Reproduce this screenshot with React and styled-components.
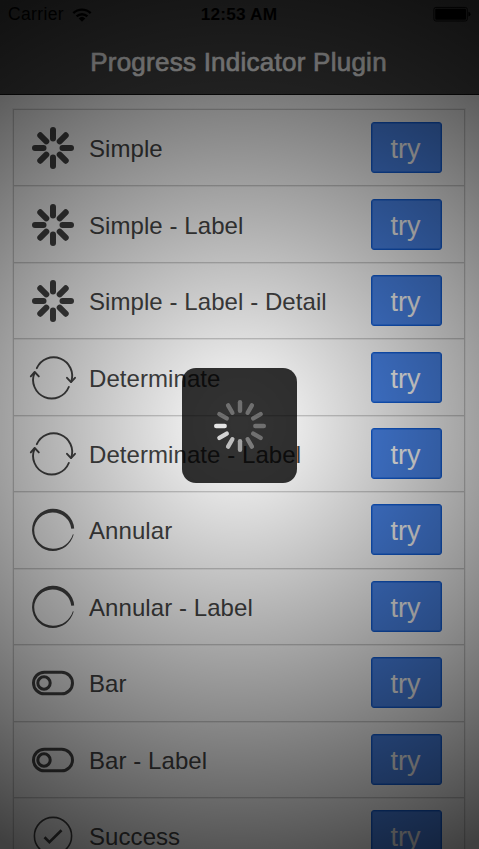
import React from "react";
import styled, { createGlobalStyle } from "styled-components";

const GlobalStyle = createGlobalStyle`
  * { box-sizing: border-box; }
  html, body { margin: 0; padding: 0; height: 100%; overflow: hidden; }
  body { font-family: "Liberation Sans", Arial, sans-serif; }
`;

const Screen = styled.main`
  position: relative;
  width: 479px;
  height: 849px;
  overflow: hidden;
  background: #fff;
`;

const Header = styled.header`
  height: 95px;
  background: #444;
  border-bottom: 1px solid #111;
`;

const StatusBar = styled.div`
  display: grid;
  grid-template-columns: 1fr auto 1fr;
  align-items: center;
  height: 29px;
  padding: 0 8px;
  color: #000;
  font-size: 17.5px;
  line-height: 29px;
`;

const Carrier = styled.div`
  display: flex;
  align-items: center;
  gap: 8px;
  letter-spacing: 0.35px;
`;

const Clock = styled.div`
  font-weight: 700;
  font-size: 17.3px;
  letter-spacing: 0.15px;
  padding-right: 1px;
`;

const Battery = styled.svg`
  justify-self: end;
  margin-top: -1px;
`;

const Title = styled.h1`
  margin: 0;
  padding: 1px 2px 0 0;
  color: #fff;
  font-size: 26px;
  font-weight: 400;
  line-height: 65px;
  text-align: center;
  letter-spacing: 0.25px;
  -webkit-text-stroke: 0.6px #fff;
`;

const List = styled.ul`
  list-style: none;
  margin: 14px 14px 0 13px;
  padding: 0;
  border: 1px solid #cecece;
  box-shadow: 0 0 0 1px rgba(0, 0, 0, 0.05);
`;

const Row = styled.li`
  display: flex;
  align-items: center;
  height: 76.45px;
  padding: 0 22px 0 15px;
  border-bottom: 1px solid #cecece;
  box-shadow: 0 1px 0 rgba(0, 0, 0, 0.07);
`;

const Icon = styled.svg`
  flex: none;
  width: 48px;
  height: 48px;
  margin-top: 1px;
  fill: none;
  stroke: #444;
  stroke-linecap: round;
`;

const Label = styled.span`
  flex: 1;
  margin-left: 12px;
  padding-top: 3px;
  color: #444;
  font-size: 24px;
  line-height: 30px;
  letter-spacing: 0.07px;
  white-space: nowrap;
`;

const TryButton = styled.button`
  flex: none;
  width: 71px;
  height: 51px;
  padding: 4px 2px 0 0;
  border: 1px solid #145fd7;
  border-radius: 3px;
  background: #4a87ee;
  box-shadow: inset 0 0 0 1px rgba(20, 95, 215, 0.45);
  color: #fff;
  font-family: inherit;
  font-size: 27px;
  line-height: 45px;
`;

const Dimmer = styled.div`
  position: absolute;
  inset: 0;
  background: radial-gradient(circle 479px at 239.5px 424.5px, rgba(0, 0, 0, 0) 0%, rgba(0, 0, 0, 0.75) 100%);
  display: grid;
  place-items: center;
`;

const Hud = styled.div`
  display: grid;
  place-items: center;
  width: 115.5px;
  height: 115.5px;
  margin-top: 2px;
  border-radius: 14px;
  background: rgba(0, 0, 0, 0.8);
`;

function SpinnerIcon() {
  return (
    <Icon viewBox="0 0 48 48" strokeWidth="6">
      {[0, 45, 90, 135, 180, 225, 270, 315].map((a) => (
        <path key={a} d="M24 6V14.5" transform={`rotate(${a} 24 24)`} />
      ))}
    </Icon>
  );
}

function LoopIcon() {
  return (
    <Icon viewBox="0 0 48 48" strokeWidth="1.9" strokeLinejoin="round">
      <path d="M7.8 14.2A18.5 18.5 0 0 1 42.2 27.7" />
      <path d="M38 23.8L42 28.1L46 23.8" />
      <path d="M39.8 33A18.5 18.5 0 0 1 5.5 18.8" />
      <path d="M1.8 22.4L5.7 18L9.8 22.4" />
    </Icon>
  );
}

function AnnularIcon() {
  return (
    <Icon viewBox="0 0 48 48">
      <path
        fill="#444"
        stroke="none"
        d="M45.2 22.6A21.1 21.1 0 1 0 24 45C33.2 45 41.6 39.2 44.7 28.6L43.9 28.3C40.6 37.9 33.2 42.8 24 42.8A18.8 18.8 0 0 1 5.2 24A18.6 18.2 0 0 1 42.3 22.8Z"
      />
    </Icon>
  );
}

function ToggleIcon() {
  return (
    <Icon viewBox="0 0 48 48" strokeWidth="3">
      <rect x="4.5" y="13.2" width="39" height="21.6" rx="10.8" />
      <circle cx="15" cy="24" r="6.2" />
    </Icon>
  );
}

function CheckIcon() {
  return (
    <Icon viewBox="0 0 48 48" strokeWidth="1.6">
      <circle cx="24" cy="24" r="18.6" />
      <path d="M15.5 25.3L20.4 30.1L32.5 18.2" strokeWidth="2.7" strokeLinecap="butt" />
    </Icon>
  );
}

const rows = [
  ["Simple", SpinnerIcon],
  ["Simple - Label", SpinnerIcon],
  ["Simple - Label - Detail", SpinnerIcon],
  ["Determinate", LoopIcon],
  ["Determinate - Label", LoopIcon],
  ["Annular", AnnularIcon],
  ["Annular - Label", AnnularIcon],
  ["Bar", ToggleIcon],
  ["Bar - Label", ToggleIcon],
  ["Success", CheckIcon],
];

const spokes = [0.3, 0.3, 0.3, 0.3, 0.3, 0.36, 0.55, 0.68, 0.79, 0.87, 0.3, 0.3];

export default function App() {
  return (
    <Screen>
      <GlobalStyle />
      <Header>
        <StatusBar>
          <Carrier>
            Carrier
            <svg width="20" height="14" viewBox="0 0 20 14" fill="none" stroke="#000" strokeWidth="2.4">
              <path d="M1.3 5.2A12.4 12.4 0 0 1 18.7 5.2" />
              <path d="M4.6 8.4A7.7 7.7 0 0 1 15.4 8.4" />
              <path d="M6.7 10.4A4.8 4.8 0 0 1 13.3 10.4L10 13.7Z" fill="#000" stroke="none" />
            </svg>
          </Carrier>
          <Clock>12:53 AM</Clock>
          <Battery width="38" height="16" viewBox="0 0 38 16">
            <rect x="0.9" y="1.4" width="33.4" height="13.6" rx="2" fill="none" stroke="#000" strokeWidth="0.9" />
            <rect x="2.2" y="2.7" width="30.8" height="11" rx="1" />
            <path d="M35.4 5.8Q37.5 6.2 37.5 8.2T35.4 10.6Z" />
          </Battery>
        </StatusBar>
        <Title>Progress Indicator Plugin</Title>
      </Header>
      <List>
        {rows.map(([name, Glyph]) => (
          <Row key={name}>
            <Glyph />
            <Label>{name}</Label>
            <TryButton>try</TryButton>
          </Row>
        ))}
      </List>
      <Dimmer>
        <Hud>
          <svg width="56" height="56" viewBox="0 0 56 56" stroke="#fff" strokeWidth="4.4" strokeLinecap="round">
            {spokes.map((o, i) => (
              <path key={i} d="M28 4.2V12.7" opacity={o} transform={`rotate(${i * 30} 28 28)`} />
            ))}
          </svg>
        </Hud>
      </Dimmer>
    </Screen>
  );
}
